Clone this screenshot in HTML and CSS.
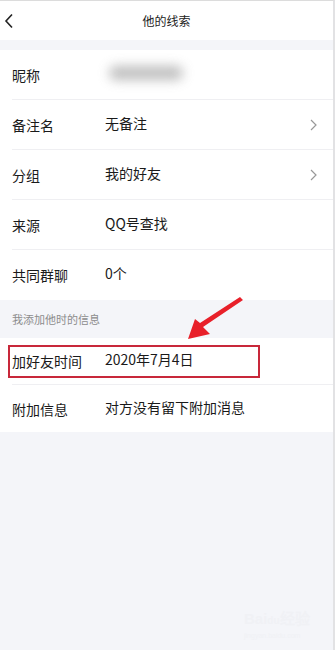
FILE: index.html
```html
<!DOCTYPE html>
<html lang="zh-CN">
<head>
  <meta charset="UTF-8" />
  <meta name="viewport" content="width=device-width, initial-scale=1.0" />
  <title>他的线索</title>
  <link rel="stylesheet" href="styles.css">
</head>
<body>
  <div class="page">
    <div class="header">
      <svg class="back" width="10" height="16" viewBox="0 0 10 16">
        <path d="M8 1.5 L2 8 L8 14.5" fill="none" stroke="#222" stroke-width="1.6" />
      </svg>
      <span class="title">他的线索</span>
    </div>

    <div class="group first">
      <div class="row">
        <span class="label">昵称</span>
        <span class="value"><span class="blur"></span></span>
      </div>
      <div class="row">
        <span class="label">备注名</span>
        <span class="value">无备注</span>
        <svg class="arrow" width="7" height="12" viewBox="0 0 7 12">
          <path d="M1 1 L6 6 L1 11" fill="none" stroke="#999" stroke-width="1.2" />
        </svg>
      </div>
      <div class="row">
        <span class="label">分组</span>
        <span class="value">我的好友</span>
        <svg class="arrow" width="7" height="12" viewBox="0 0 7 12">
          <path d="M1 1 L6 6 L1 11" fill="none" stroke="#999" stroke-width="1.2" />
        </svg>
      </div>
      <div class="row">
        <span class="label">来源</span>
        <span class="value">QQ号查找</span>
      </div>
      <div class="row">
        <span class="label">共同群聊</span>
        <span class="value">0个</span>
      </div>
    </div>

    <div class="section-title">我添加他时的信息</div>

    <div class="group">
      <div class="row tall">
        <span class="label">加好友时间</span>
        <span class="value">2020年7月4日</span>
      </div>
      <div class="row tall">
        <span class="label">附加信息</span>
        <span class="value">对方没有留下附加消息</span>
      </div>
    </div>

    <div class="mark-box"></div>
    <svg class="pointer" width="335" height="650" viewBox="0 0 335 650">
      <path d="M243 299 L203 326 L210 333 L188 338 L195 318 L200 322 L240 296 Z" fill="#e8202a" />
    </svg>

    <div class="watermark">Bai<span class="du">du</span>经验<br><small>jingyan.baidu.com</small></div>
  </div>
</body>
</html>
```

FILE: styles.css
```css
body {
  margin: 0;
  padding: 0;
  font-family: "Noto Sans CJK SC", "Noto Sans", sans-serif;
  background: #f4f5f9;
}

.page {
  position: relative;
  width: 335px;
  height: 650px;
  overflow: hidden;
  background: #f4f5f9;
  border-top: 1px solid #dcdcdc;
  box-sizing: border-box;
  border-right: 2px solid #e2e2e4;
}

.header {
  height: 39px;
  background: #fff;
  display: flex;
  align-items: center;
  justify-content: center;
  position: relative;
}

.back {
  position: absolute;
  left: 4px;
  top: 12px;
}

.title {
  font-size: 12px;
  color: #222;
}

.group {
  background: #fff;
}

.group.first {
  margin-top: 10px;
}

.row {
  height: 50px;
  box-sizing: border-box;
  display: flex;
  align-items: center;
  margin-left: 12px;
  padding-right: 16px;
  border-bottom: 1px solid #efeff2;
  font-size: 14px;
  color: #1a1a1a;
}

.row:last-child {
  border-bottom: none;
}

.row.tall {
  height: 47px;
}

.label {
  width: 93px;
  flex-shrink: 0;
}

.value {
  flex: 1;
  position: relative;
  top: -2px;
}

.blur {
  display: block;
  width: 74px;
  height: 14px;
  background: #a8a8a8;
  border-radius: 8px;
  filter: blur(6px);
  opacity: 0.75;
  margin-left: 4px;
}

.arrow {
  flex-shrink: 0;
}

.section-title {
  height: 38px;
  box-sizing: border-box;
  padding: 11px 0 0 12px;
  font-size: 11px;
  color: #8c8c8c;
}

.mark-box {
  position: absolute;
  left: 8px;
  top: 344px;
  width: 252px;
  height: 33px;
  box-sizing: border-box;
  border: 2px solid #c8283a;
}

.pointer {
  position: absolute;
  left: 0;
  top: 0;
}

.watermark {
  position: absolute;
  left: 244px;
  top: 612px;
  font-family: "Liberation Sans", sans-serif;
  font-size: 15px;
  font-weight: bold;
  color: #f0f1f5;
  line-height: 12px;
}

.watermark .du {
  font-size: 10px;
}

.watermark small {
  font-size: 7px;
  font-weight: normal;
}
```
